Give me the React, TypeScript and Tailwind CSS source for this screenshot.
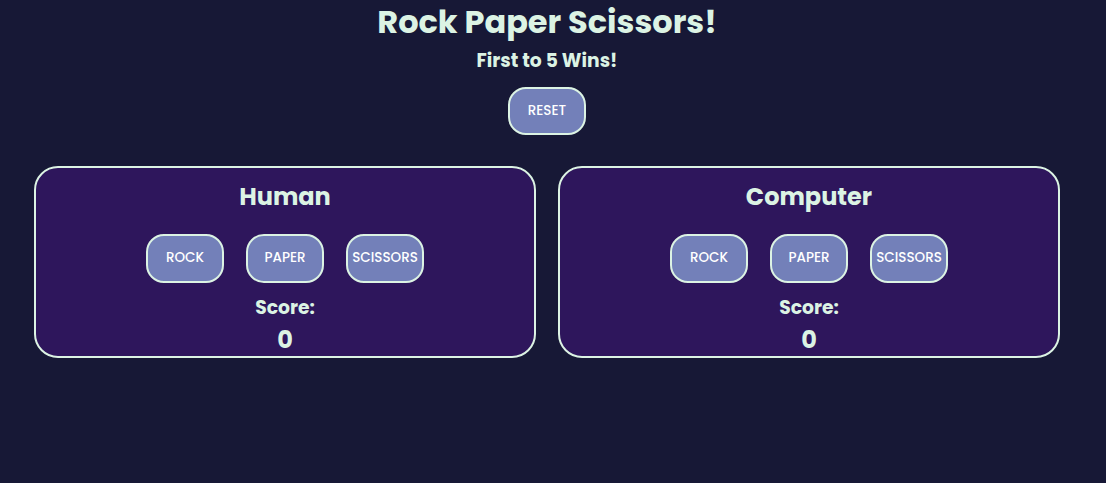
const choices = ["ROCK", "PAPER", "SCISSORS"];

function Choice({ label }: { label: string }) {
  return (
    <button className="flex h-[49px] w-[78px] items-center justify-center rounded-[18px] border-2 border-[#dcf3e4] bg-[#7380b9] text-[13.5px] font-medium text-white">
      {label}
    </button>
  );
}

function Player({ name }: { name: string }) {
  return (
    <div className="flex h-[192px] w-[502px] flex-col items-center rounded-[24px] border-2 border-[#dcf3e4] bg-[#2e165c] pt-[14px]">
      <h2 className="text-[24px] font-bold leading-[30px] text-[#dcf3e4]">{name}</h2>
      <div className="mt-[22px] flex gap-[22px]">
        {choices.map((c) => (
          <Choice key={c} label={c} />
        ))}
      </div>
      <p className="mt-[13px] text-[18.72px] font-bold leading-[24px] text-[#dcf3e4]">Score:</p>
      <p className="mt-[5px] text-[24px] font-bold leading-[30px] text-[#dcf3e4]">0</p>
    </div>
  );
}

export default function App() {
  return (
    <div
      className="flex min-h-[483px] w-full flex-col items-center bg-[#171836] pr-[12px]"
      style={{ fontFamily: "Poppins, 'Open Sans', sans-serif" }}
    >
      <h1 className="text-[32px] font-bold leading-[44px] text-[#dcf3e4]">Rock Paper Scissors!</h1>
      <p className="mt-[5px] text-[18.72px] font-bold leading-[24px] text-[#dcf3e4]">First to 5 Wins!</p>
      <button className="mt-[14px] flex h-[48px] w-[78px] items-center justify-center rounded-[18px] border-2 border-[#dcf3e4] bg-[#7380b9] text-[13.5px] font-medium text-white">
        RESET
      </button>
      <div className="mt-[31px] flex gap-[22px]">
        <Player name="Human" />
        <Player name="Computer" />
      </div>
    </div>
  );
}
